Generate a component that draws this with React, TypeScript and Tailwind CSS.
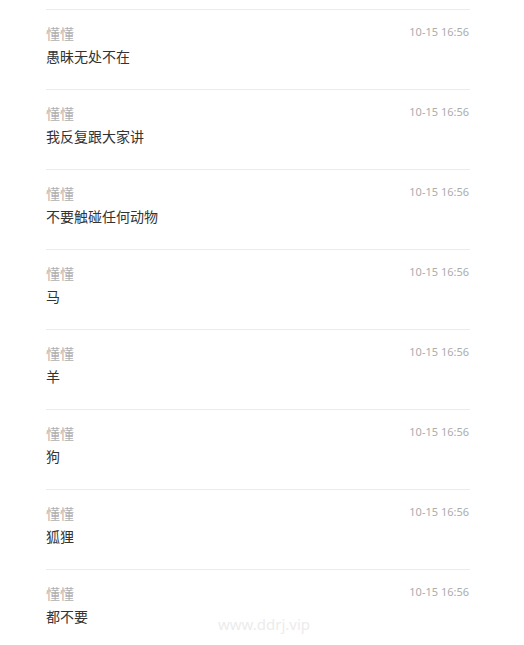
const messages = [
  "愚昧无处不在",
  "我反复跟大家讲",
  "不要触碰任何动物",
  "马",
  "羊",
  "狗",
  "狐狸",
  "都不要",
]

export default function App() {
  return (
    <div
      className="relative h-[645px] w-[524px] overflow-hidden bg-white"
      style={{ fontFamily: '"Noto Sans", "Noto Sans CJK SC", sans-serif' }}
    >
      <div className="ml-[46px] w-[424px] pt-[9px]">
        {messages.map((text, i) => (
          <div key={i} className="h-[80px] border-t border-[#ebebeb] pt-[14px]">
            <div className="flex items-start justify-between">
              <span className="text-[14px] leading-[20px] text-[#b0b0b0]">懂懂</span>
              <span className="-mt-[1px] pr-[1px] text-[11px] leading-[18px] text-[#acacac]">10-15 16:56</span>
            </div>
            <div className="mt-[3px] text-[14px] leading-[20px] text-[#333]">{text}</div>
          </div>
        ))}
      </div>

      {/* watermark */}
      <div className="absolute left-[218px] top-[614px] text-[15px] leading-[20px] text-[#ececec]">
        www.ddrj.vip
      </div>
    </div>
  )
}
